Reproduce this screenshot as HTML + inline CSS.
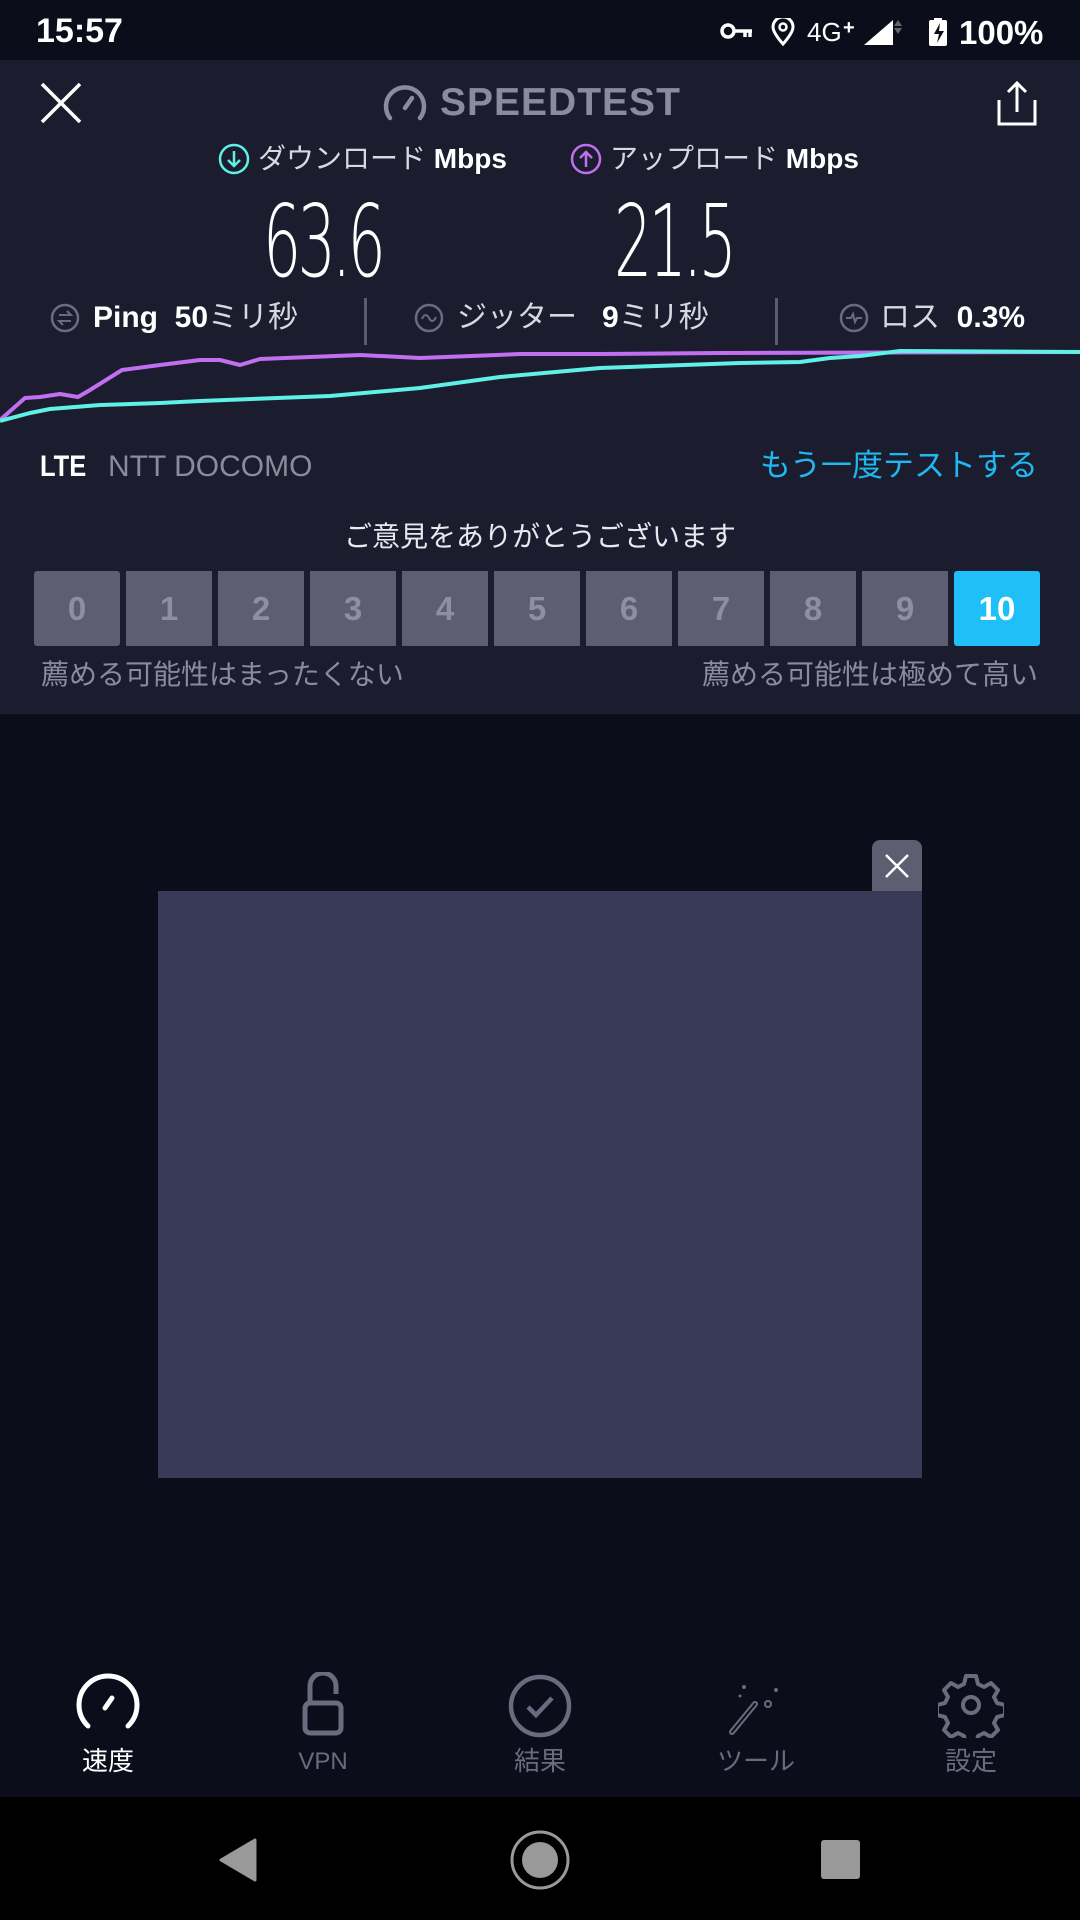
<!DOCTYPE html>
<html><head><meta charset="utf-8"><style>
*{margin:0;padding:0;box-sizing:border-box}
body{width:1080px;height:1920px;background:#0b0d1a;position:relative;overflow:hidden;font-family:"Liberation Sans","Noto Sans CJK JP",sans-serif;color:#fff}
.abs{position:absolute}
.t{white-space:nowrap;line-height:1}
</style></head><body>
<div class="abs" style="left:0;top:0;width:1080px;height:60px;background:#0b0d1a"></div>
<div class="abs t" style="left:36px;top:14px;font-size:34px;font-weight:bold">15:57</div>
<svg class="abs" style="left:718px;top:18px" width="340" height="30" viewBox="718 18 340 30">
 <circle cx="728" cy="31" r="6" fill="none" stroke="#fff" stroke-width="3.5"/>
 <path d="M734 31H752M745 31v6M750 31v6" stroke="#fff" stroke-width="3.5" fill="none"/>
 <path d="M783 44C776 36 773 31 773 27a10 10 0 0 1 20 0c0 4-3 9-10 17z" fill="none" stroke="#fff" stroke-width="3"/>
 <circle cx="783" cy="27" r="3.5" fill="none" stroke="#fff" stroke-width="2.5"/>
 <text x="807" y="41" font-size="26" fill="#fff" font-family="Liberation Sans">4G</text>
 <text x="843" y="34" font-size="20" fill="#fff" font-weight="bold" font-family="Liberation Sans">+</text>
 <path d="M864 45L893 45 893 20z" fill="#fff"/>
 <path d="M898 20l4 6h-8zM898 34l4-6h-8z" fill="#666"/>
 <rect x="929" y="20" width="18" height="26" rx="2" fill="#fff"/>
 <rect x="934" y="16" width="8" height="5" fill="#fff"/>
 <path d="M940 23l-6 11h5l-2 9 7-12h-5z" fill="#0b0d1a"/>
 <text x="959" y="44" font-size="33" fill="#fff" font-weight="bold" font-family="Liberation Sans">100%</text>
</svg>
<div class="abs" style="left:0;top:60px;width:1080px;height:654px;background:#1b1d2f"></div>
<svg class="abs" style="left:40px;top:82px" width="42" height="42"><path d="M2 2L40 40M40 2L2 40" stroke="#fff" stroke-width="3.5"/></svg>
<svg class="abs" style="left:382px;top:82px" width="46" height="40" viewBox="0 0 46 40"><path d="M8 36A19 19 0 1 1 38 36" fill="none" stroke="#8a8b9c" stroke-width="4.5" stroke-linecap="round"/><path d="M23 26l7-10" stroke="#8a8b9c" stroke-width="4.5" stroke-linecap="round"/></svg>
<div class="abs t" style="left:440px;top:83px;font-size:39px;font-weight:bold;color:#8a8b9c;letter-spacing:1px">SPEEDTEST</div>
<svg class="abs" style="left:996px;top:80px" width="42" height="46"><path d="M3 20V44H39V20M21 32V3M12 12L21 3 30 12" fill="none" stroke="#fff" stroke-width="3"/></svg>
<svg class="abs" style="left:218px;top:143px" width="32" height="32"><circle cx="16" cy="16" r="14" fill="none" stroke="#5ff0e6" stroke-width="2.5"/><path d="M16 8V23M10 17l6 6 6-6" fill="none" stroke="#5ff0e6" stroke-width="2.5"/></svg>
<div class="abs t" style="left:258px;top:145px;font-size:28px;color:#d8d8e0">ダウンロード <b style="color:#fff">Mbps</b></div>
<svg class="abs" style="left:570px;top:143px" width="32" height="32"><circle cx="16" cy="16" r="14" fill="none" stroke="#c06ff0" stroke-width="2.5"/><path d="M16 24V9M10 15l6-6 6 6" fill="none" stroke="#c06ff0" stroke-width="2.5"/></svg>
<div class="abs t" style="left:610px;top:145px;font-size:28px;color:#d8d8e0">アップロード <b style="color:#fff">Mbps</b></div>
<div class="abs t" style="left:263px;top:192px;font-size:100px;transform:scaleX(0.6);transform-origin:left top;font-family:'DejaVu Sans','Liberation Sans',sans-serif;font-weight:200;letter-spacing:-6px">63.6</div>
<div class="abs t" style="left:614px;top:192px;font-size:100px;transform:scaleX(0.6);transform-origin:left top;font-family:'DejaVu Sans','Liberation Sans',sans-serif;font-weight:200;letter-spacing:-6px">21.5</div>
<svg class="abs" style="left:50px;top:303px" width="30" height="30"><circle cx="15" cy="15" r="13" fill="none" stroke="#6a6b7e" stroke-width="2.5"/><path d="M9 12h12l-4-4M21 18H9l4 4" fill="none" stroke="#6a6b7e" stroke-width="2"/></svg>
<div class="abs t" style="left:93px;top:303px;font-size:30px;color:#d8d8e0"><b style="color:#fff">Ping</b>&nbsp; <b style="color:#fff">50</b>ミリ秒</div>
<div class="abs" style="left:364px;top:298px;width:3px;height:47px;background:#5a5b6e"></div>
<svg class="abs" style="left:414px;top:303px" width="30" height="30"><circle cx="15" cy="15" r="13" fill="none" stroke="#6a6b7e" stroke-width="2.5"/><path d="M8 16c2-5 5-5 7-1s5 4 7-1" fill="none" stroke="#6a6b7e" stroke-width="2"/></svg>
<div class="abs t" style="left:457px;top:303px;font-size:30px;color:#d8d8e0">ジッター&nbsp;&nbsp; <b style="color:#fff">9</b>ミリ秒</div>
<div class="abs" style="left:775px;top:298px;width:3px;height:47px;background:#5a5b6e"></div>
<svg class="abs" style="left:839px;top:303px" width="30" height="30"><circle cx="15" cy="15" r="13" fill="none" stroke="#6a6b7e" stroke-width="2.5"/><path d="M7 15h5l2-4 2 8 2-4h5" fill="none" stroke="#6a6b7e" stroke-width="2"/></svg>
<div class="abs t" style="left:880px;top:303px;font-size:30px;color:#d8d8e0">ロス&nbsp; <b style="color:#fff">0.3%</b></div>
<svg class="abs" style="left:0;top:340px" width="1080" height="90" viewBox="0 340 1080 90">
<polyline fill="none" stroke="#c06ff0" stroke-width="4" stroke-linejoin="round" points="0,420 25,398 40,397 60,394 78,397 90,390 122,370 160,365 200,360 220,360 240,365 260,359 360,355 420,358 520,354 600,354 720,353 1080,352"/>
<polyline fill="none" stroke="#5ff0e6" stroke-width="4" stroke-linejoin="round" points="0,421 30,413 50,409 100,405 160,403 200,401 330,396 420,388 500,377 600,368 740,363 800,362 830,358 860,356 900,351 1080,352"/>
</svg>
<div class="abs t" style="left:40px;top:452px;font-size:30px;font-weight:bold;transform:scaleX(0.85);transform-origin:left top">LTE</div>
<div class="abs t" style="left:108px;top:452px;font-size:30px;color:#8a8b9c">NTT DOCOMO</div>
<div class="abs t" style="right:42px;top:450px;font-size:31px;color:#1fb8f0">もう一度テストする</div>
<div class="abs t" style="left:0;width:1080px;text-align:center;top:523px;font-size:28px;color:#e8e8ee">ご意見をありがとうございます</div>
<div class="abs" style="left:34px;top:571px;display:flex;gap:6px">
<div style="width:86px;height:75px;background:#5d5e72;border-radius:3px;color:#8e8fa2;font-size:33px;font-weight:bold;display:flex;align-items:center;justify-content:center">0</div>
<div style="width:86px;height:75px;background:#5d5e72;color:#8e8fa2;font-size:33px;font-weight:bold;display:flex;align-items:center;justify-content:center">1</div>
<div style="width:86px;height:75px;background:#5d5e72;color:#8e8fa2;font-size:33px;font-weight:bold;display:flex;align-items:center;justify-content:center">2</div>
<div style="width:86px;height:75px;background:#5d5e72;color:#8e8fa2;font-size:33px;font-weight:bold;display:flex;align-items:center;justify-content:center">3</div>
<div style="width:86px;height:75px;background:#5d5e72;color:#8e8fa2;font-size:33px;font-weight:bold;display:flex;align-items:center;justify-content:center">4</div>
<div style="width:86px;height:75px;background:#5d5e72;color:#8e8fa2;font-size:33px;font-weight:bold;display:flex;align-items:center;justify-content:center">5</div>
<div style="width:86px;height:75px;background:#5d5e72;color:#8e8fa2;font-size:33px;font-weight:bold;display:flex;align-items:center;justify-content:center">6</div>
<div style="width:86px;height:75px;background:#5d5e72;color:#8e8fa2;font-size:33px;font-weight:bold;display:flex;align-items:center;justify-content:center">7</div>
<div style="width:86px;height:75px;background:#5d5e72;color:#8e8fa2;font-size:33px;font-weight:bold;display:flex;align-items:center;justify-content:center">8</div>
<div style="width:86px;height:75px;background:#5d5e72;color:#8e8fa2;font-size:33px;font-weight:bold;display:flex;align-items:center;justify-content:center">9</div>
<div style="width:86px;height:75px;background:#1fc0fa;border-radius:3px;color:#fff;font-size:33px;font-weight:bold;display:flex;align-items:center;justify-content:center">10</div>
</div>
<div class="abs t" style="left:41px;top:661px;font-size:28px;color:#8a8b9c">薦める可能性はまったくない</div>
<div class="abs t" style="right:42px;top:661px;font-size:28px;color:#8a8b9c">薦める可能性は極めて高い</div>
<div class="abs" style="left:872px;top:840px;width:50px;height:52px;background:#5d5e72;border-radius:8px 8px 0 0"></div>
<svg class="abs" style="left:884px;top:853px" width="26" height="26"><path d="M2 2L24 24M24 2L2 24" stroke="#fff" stroke-width="2.5"/></svg>
<div class="abs" style="left:158px;top:891px;width:764px;height:587px;background:#383a58"></div>
<svg class="abs" style="left:76px;top:1672px" width="64" height="60" viewBox="0 0 64 60"><path d="M12 54A29 29 0 1 1 52 54" fill="none" stroke="#fff" stroke-width="5" stroke-linecap="round"/><path d="M29 36l7-10" stroke="#fff" stroke-width="5" stroke-linecap="round"/></svg>
<div class="abs t" style="left:68px;top:1748px;width:80px;text-align:center;font-size:26px;color:#fff">速度</div>
<svg class="abs" style="left:300px;top:1672px" width="46" height="66"><path d="M36 22V14A13 13 0 0 0 10 14V30" fill="none" stroke="#6a6b7e" stroke-width="5"/><rect x="5" y="31" width="36" height="30" rx="5" fill="none" stroke="#6a6b7e" stroke-width="5"/></svg>
<div class="abs t" style="left:283px;top:1750px;width:80px;text-align:center;font-size:24px;color:#6a6b7e">VPN</div>
<svg class="abs" style="left:506px;top:1672px" width="68" height="68"><circle cx="34" cy="34" r="29" fill="none" stroke="#6a6b7e" stroke-width="4.5"/><path d="M22 35l8 8 16-17" fill="none" stroke="#6a6b7e" stroke-width="4.5"/></svg>
<div class="abs t" style="left:500px;top:1748px;width:80px;text-align:center;font-size:26px;color:#6a6b7e">結果</div>
<svg class="abs" style="left:728px;top:1682px" width="56" height="56"><path d="M4 50L27 22" stroke="#6a6b7e" stroke-width="6" stroke-linecap="round"/><path d="M4 50L27 22" stroke="#0b0d1a" stroke-width="2" stroke-linecap="round"/><circle cx="40" cy="22" r="3" fill="none" stroke="#6a6b7e" stroke-width="2"/><circle cx="16" cy="5" r="2" fill="#6a6b7e"/><circle cx="48" cy="8" r="2" fill="#6a6b7e"/><circle cx="12" cy="14" r="1.5" fill="#6a6b7e"/></svg>
<div class="abs t" style="left:706px;top:1748px;width:100px;text-align:center;font-size:26px;color:#6a6b7e">ツール</div>
<svg class="abs" style="left:938px;top:1672px" width="66" height="66" viewBox="-33 -33 66 66"><path d="M-5-29h10l2 8 6 3 7-4 7 7-4 7 3 6 8 2v10l-8 2-3 6 4 7-7 7-7-4-6 3-2 8h-10l-2-8-6-3-7 4-7-7 4-7-3-6-8-2v-10l8-2 3-6-4-7 7-7 7 4 6-3z" fill="none" stroke="#6a6b7e" stroke-width="4" stroke-linejoin="round"/><circle r="8" fill="none" stroke="#6a6b7e" stroke-width="4"/></svg>
<div class="abs t" style="left:931px;top:1748px;width:80px;text-align:center;font-size:26px;color:#6a6b7e">設定</div>
<div class="abs" style="left:0;top:1797px;width:1080px;height:123px;background:#000"></div>
<svg class="abs" style="left:218px;top:1838px" width="40" height="44"><path d="M37 2V42L3 22z" fill="#999" stroke="#999" stroke-width="3" stroke-linejoin="round"/></svg>
<svg class="abs" style="left:508px;top:1828px" width="64" height="64"><circle cx="32" cy="32" r="28" fill="none" stroke="#999" stroke-width="3"/><circle cx="32" cy="32" r="18" fill="#999"/></svg>
<div class="abs" style="left:821px;top:1840px;width:39px;height:39px;background:#999;border-radius:3px"></div>
</body></html>
